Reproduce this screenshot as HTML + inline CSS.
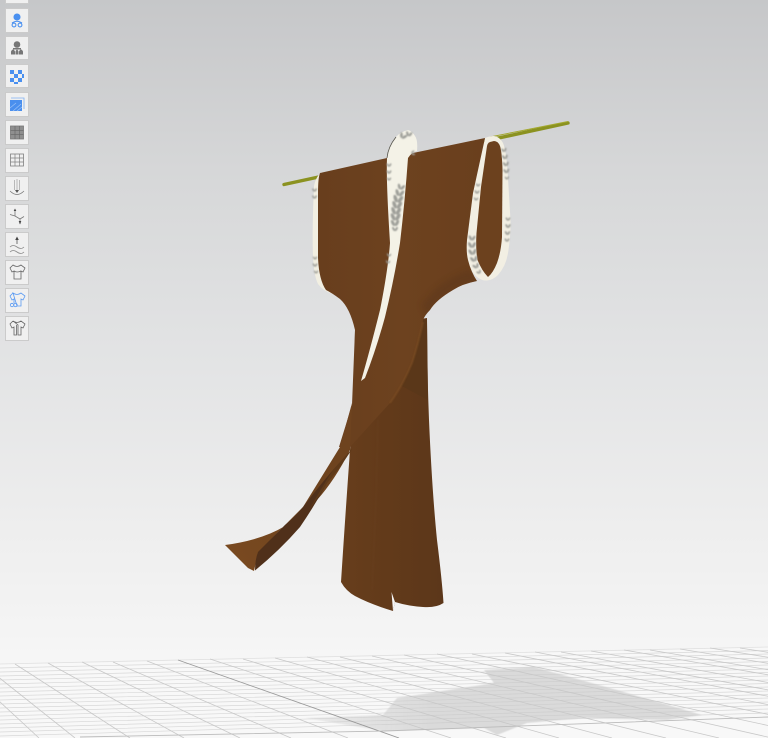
<!DOCTYPE html>
<html><head><meta charset="utf-8">
<style>
html,body{margin:0;padding:0;width:768px;height:738px;overflow:hidden}
body{background:linear-gradient(#c6c7c9 0,#d6d7d8 170px,#e2e3e4 350px,#eeeeee 530px,#f6f6f6 660px,#f6f6f6 738px)}
svg{position:absolute;left:0;top:0}
</style></head>
<body>
<svg width="768" height="738" viewBox="0 0 768 738" xmlns="http://www.w3.org/2000/svg">
<defs>
<linearGradient id="upper" x1="0" x2="1" y1="0" y2="0"><stop offset="0" stop-color="#683e1d"/><stop offset=".5" stop-color="#6d421f"/><stop offset="1" stop-color="#6a3f1d"/></linearGradient>
<linearGradient id="skirt" x1="0" x2="1" y1="0" y2="0"><stop offset="0" stop-color="#673e1c"/><stop offset=".45" stop-color="#623a1a"/><stop offset="1" stop-color="#5c371a"/></linearGradient>
<linearGradient id="tail" x1="0" x2="1" y1="1" y2="0"><stop offset="0" stop-color="#7a4a20"/><stop offset=".6" stop-color="#6e431e"/><stop offset="1" stop-color="#6e431f"/></linearGradient>
<linearGradient id="shad" gradientUnits="userSpaceOnUse" x1="305" x2="430" y1="0" y2="0"><stop offset="0" stop-color="#c8c8c8" stop-opacity=".3"/><stop offset="1" stop-color="#c8c8c8" stop-opacity=".62"/></linearGradient>
<filter id="soft" x="-30%" y="-30%" width="160%" height="160%"><feGaussianBlur stdDeviation=".75"/></filter>
<filter id="soft1" x="-20%" y="-20%" width="140%" height="140%"><feGaussianBlur stdDeviation=".5"/></filter>
<filter id="soft3" x="-20%" y="-20%" width="140%" height="140%"><feGaussianBlur stdDeviation="3"/></filter>
<clipPath id="panelclip"><path d="M320 173L387 158L413 153L485 138L473 193L467 240Q466 252 468 260Q471 272 477 281Q462 284 453 290Q436 300 430 310Q425 315 423 320Q418 345 412 363Q403 385 390 403Q370 425 350 447L339 447L352 405L355 330Q350 308 340 299Q332 293 326 290Q319 280 318 258L318 193Q318 178 320 173Z"/></clipPath>
<g id="wheat" fill="#9d9e98"><ellipse cx="-2.600" cy="0" rx="1.900" ry="4.200" transform="rotate(-28 -2.600 0)"/><ellipse cx="2.600" cy="0" rx="1.900" ry="4.200" transform="rotate(28 2.600 0)"/></g>
</defs>

<!-- floor -->
<path d="M0 664L768 647V738H0Z" fill="#f8f8f8"/>
<path d="M0 668L768 650.500M0 672L768 654M0 676L768 658M0 680L768 661.500M0 684L768 665M0 688L768 669M0 692L768 672.500M0 696L768 676M0 700L768 680M0 704L768 683.500M0 708L768 687M0 712L768 691M0 716L768 694.500M0 720L768 698M0 724L768 702M0 728L768 705.500M0 732L768 709M0 736L768 713" stroke="#d8d8d8" stroke-width=".7" fill="none"/>
<path d="M0 664L768 647" stroke="#e0e0e0" stroke-width=".8"/>
<!-- shadow -->
<path d="M484 670L534 667L617 690L702 715L667 720L584 718L527 723L497 735L484 728L384 731L305 718L383 715L397 698L494 683Z" fill="url(#shad)" filter="url(#soft1)"/>
<path d="M-65 665L-2 738M-40 665L39 738M-18 664L75 738M15 664L130 738M48 663L184 738M82 662L240 738M113 662L291 738M147 661L348 738M210 659L451 738M243 659L506 738M275 658L559 738M307 657L612 738M340 657L666 738M372 656L719 738M404 655L772 738M437 654L826 738M472 654L884 738M505 653L938 738M535 652L988 738M561 652L1031 738M591 651L1080 738M624 650L1135 738M650 650L1177 738M680 649L1227 738M710 648L1276 738M740 648L1326 738M770 647L1375 738" stroke="#c8c8c8" stroke-width=".8" fill="none"/>
<path d="M178 660L399 738" stroke="#999" stroke-width=".9" fill="none"/>
<path d="M80 737L384 731L768 717" stroke="#bbb" stroke-width=".9" fill="none"/>

<!-- rod -->
<path d="M284 184.500L568 123" stroke="#8b9220" stroke-width="3.400" stroke-linecap="round"/>
<path d="M490 137L568 121.500" stroke="#a3a82c" stroke-width="1"/>

<!-- right loop: outer white -->
<path d="M493 136Q488 136.500 485 138L473 193L467 240Q466 252 468 260Q471 272 477 277Q482 281 487 280.500Q493 280 498 275Q506 266 508 253Q511 235 510.500 220L507.500 170Q506 150 503 143Q499 136 493 136Z" fill="#f2efe3"/>
<!-- right loop: inner brown -->
<path d="M490 142Q487.500 143 487 146L481 187L476.500 233Q475.500 250 477.500 260Q482 271 488 277Q493 273 497 263Q501 252 502 237L502.500 170Q502 152 500 146Q498 141 494 141Z" fill="#6c411e"/>
<g filter="url(#soft)">
<use href="#wheat" transform="translate(504 150) rotate(-8) scale(.5)"/><use href="#wheat" transform="translate(505 157) rotate(-8) scale(.55)"/><use href="#wheat" transform="translate(506 164) rotate(-8) scale(.55)"/><use href="#wheat" transform="translate(506.500 171) rotate(-8) scale(.55)"/><use href="#wheat" transform="translate(507 178) rotate(-8) scale(.4)"/>
<use href="#wheat" transform="translate(508 219) scale(.45)"/><use href="#wheat" transform="translate(508 226) scale(.5)"/><use href="#wheat" transform="translate(507.500 233) scale(.5)"/><use href="#wheat" transform="translate(507 240) scale(.45)"/>
<use href="#wheat" transform="translate(478 185) rotate(6) scale(.4)"/><use href="#wheat" transform="translate(477 192) rotate(6) scale(.45)"/><use href="#wheat" transform="translate(476 199) rotate(6) scale(.4)"/>
<use href="#wheat" transform="translate(472 238) rotate(4) scale(.65)"/><use href="#wheat" transform="translate(472 245) rotate(0) scale(.75)"/><use href="#wheat" transform="translate(472.500 252) rotate(-6) scale(.75)"/><use href="#wheat" transform="translate(474 259) rotate(-14) scale(.7)"/><use href="#wheat" transform="translate(476 266) rotate(-24) scale(.6)"/><use href="#wheat" transform="translate(479 272) rotate(-34) scale(.45)"/>
</g>

<!-- left hem white -->
<path d="M322 172Q316 176 314 186Q312 230 313 257Q314 276 318 284Q323 291 333 294L340 280L325 180Z" fill="#f2efe2"/>
<g filter="url(#soft)">
<use href="#wheat" transform="translate(314.500 190) scale(.45)"/><use href="#wheat" transform="translate(314.500 197) scale(.45)"/><use href="#wheat" transform="translate(315 258) scale(.4)"/><use href="#wheat" transform="translate(315 265) scale(.45)"/><use href="#wheat" transform="translate(316 272) scale(.4)"/>
</g>

<!-- skirt -->
<path d="M355 330L427 318Q427 370 429 420Q432 490 437 540Q442 580 443.500 603Q436 608 423 607Q408 606 395 602L393 611Q370 604 355 596Q346 591 341 582Q345 520 350 450L354 400Z" fill="url(#skirt)"/>
<path d="M393 611L395 602L391.500 592Z" fill="#f6f6f6"/>
<path d="M378 420L376 500L372 590" stroke="#6d4420" stroke-width="1.500" fill="none" opacity=".3" filter="url(#soft)"/>
<!-- darker strip right of front panel -->
<path d="M423 320Q418 345 412 363L400 385L428 400L427 320Z" fill="#5a3719"/>

<!-- main upper panel -->
<path d="M320 173L387 158L413 153L485 138L473 193L467 240Q466 252 468 260Q471 272 477 281Q462 284 453 290Q436 300 430 310Q425 315 423 320Q418 345 412 363Q403 385 390 403Q370 425 350 447L339 447L352 405L355 330Q350 308 340 299Q332 293 326 290Q319 280 318 258L318 193Q318 178 320 173Z" fill="url(#upper)"/>
<!-- soft shading near sleeve underside, clipped to the panel -->
<g clip-path="url(#panelclip)"><path d="M477 281Q458 284 445 295Q432 305 428 318L422 305Q440 280 470 270Z" fill="#5d371a" opacity=".55" filter="url(#soft3)"/></g>
<path d="M423 322Q418 345 412 363Q403 385 390 403" stroke="#7c4d23" stroke-width="2" fill="none" opacity=".6" filter="url(#soft1)"/>

<!-- trailing panel -->
<path d="M352 403L350 450Q335 480 317 500Q300 518 285 526Q262 540 225 545Q240 560 248 568L254 571L258 553Q270 540 303 507L340 447Z" fill="url(#tail)"/>
<path d="M352 449Q340 468 327 483Q315 505 300 527Q280 550 255 570.500Q255 560 258 552Q270 540 285 525Q295 517 303 507Q320 485 333 470Q342 460 352 449Z" fill="#50301a"/>
<path d="M352 449Q340 468 327 483Q318 498 309 510Q322 487 333 470Z" fill="#5f3a19"/>

<!-- center ribbon -->
<path d="M408 130Q400 132 396 137Q388 147 387 158Q386 180 390 243Q388 270 380 310Q370 350 361 381L365 378Q376 350 385 317Q394 280 400 243Q405 200 408 158Q412 152 417 151Q418 140 415 136Q412 131 408 130Z" fill="#f4f2e7"/>
<path d="M396 137Q388 147 387 158" stroke="#55534b" stroke-width=".8" fill="none"/>
<g filter="url(#soft)">
<use href="#wheat" transform="translate(403 136) rotate(30) scale(.7)"/><use href="#wheat" transform="translate(409 134) rotate(10) scale(.6)"/><use href="#wheat" transform="translate(413 153) rotate(80) scale(.45)"/>
<use href="#wheat" transform="translate(389 165) scale(.45)"/><use href="#wheat" transform="translate(389 172) scale(.45)"/><use href="#wheat" transform="translate(389 179) scale(.4)"/>
<use href="#wheat" transform="translate(401 187) rotate(15) scale(.7)"/><use href="#wheat" transform="translate(399.500 193) rotate(12) scale(.85)"/><use href="#wheat" transform="translate(398 199) rotate(10) scale(.95)"/><use href="#wheat" transform="translate(397 205) rotate(6) scale(.95)"/><use href="#wheat" transform="translate(396 211) rotate(5) scale(.95)"/><use href="#wheat" transform="translate(395.500 217) rotate(2) scale(.95)"/><use href="#wheat" transform="translate(395 223) scale(.8)"/><use href="#wheat" transform="translate(395 229) scale(.55)"/>
<use href="#wheat" transform="translate(389 255) rotate(10) scale(.4)"/><use href="#wheat" transform="translate(388 262) rotate(10) scale(.4)"/>
</g>

<!-- toolbar -->
<g fill="#f0f0f0" stroke="#cbcbcb" stroke-width="1">
<rect x="5.500" y="-20.500" width="23" height="24"/>
<rect x="5.500" y="8.500" width="23" height="24"/>
<rect x="5.500" y="36.500" width="23" height="23"/>
<rect x="5.500" y="64.500" width="23" height="23"/>
<rect x="5.500" y="92.500" width="23" height="24"/>
<rect x="5.500" y="120.500" width="23" height="24"/>
<rect x="5.500" y="148.500" width="23" height="24"/>
<rect x="5.500" y="176.500" width="23" height="24"/>
<rect x="5.500" y="204.500" width="23" height="24"/>
<rect x="5.500" y="232.500" width="23" height="24"/>
<rect x="5.500" y="260.500" width="23" height="24"/>
<rect x="5.500" y="288.500" width="23" height="24"/>
<rect x="5.500" y="316.500" width="23" height="24"/>
</g>
<!-- icon 1 -->
<g fill="none" stroke="#4a90f0" stroke-width="1.100"><circle cx="17" cy="17" r="3" fill="#4a90f0"/><circle cx="14" cy="25" r="1.900"/><circle cx="20" cy="25" r="1.900"/><path d="M12 23Q17 19.500 22 23"/></g>
<!-- icon 2 -->
<g fill="#777"><circle cx="17" cy="44.500" r="3.300"/><path d="M11 54.500v-3q1-2 2-2t2 2v3zM15.500 54.500v-3q1-2 1.500-2t1.500 2v3zM19 54.500v-3q1-2 2-2t2 2v3z"/><path d="M13 49.500h8v-1.500h-8z"/></g>
<!-- icon 3 checker -->
<g fill="#4a90f0"><rect x="10" y="70" width="4" height="4"/><rect x="18" y="70" width="4" height="4"/><rect x="14" y="74" width="4" height="4"/><rect x="22" y="74" width="2" height="4"/><rect x="10" y="78" width="4" height="4"/><rect x="18" y="78" width="4" height="4"/><rect x="14" y="82" width="4" height="2"/></g>
<!-- icon 4 -->
<rect x="10" y="100" width="12" height="11" fill="#4a8fee"/><path d="M11 98H24V109" fill="none" stroke="#7faef2" stroke-width=".8"/><path d="M10 108L16 103M13 111L21 104M17 111L22 107" stroke="#9cc2f7" stroke-width=".7"/>
<!-- icon 5 -->
<rect x="10.500" y="126" width="13" height="13" fill="#8f8f8f" stroke="#777" stroke-width=".8"/><path d="M15 126V139M19.500 126V139M10.500 130.300H23.500M10.500 134.700H23.500" stroke="#666" stroke-width=".6"/>
<!-- icon 6 -->
<rect x="10.500" y="154" width="13" height="12" fill="none" stroke="#808080" stroke-width=".8"/><path d="M15 154V166M19.500 154V166M10.500 158H23.500M10.500 162H23.500" stroke="#808080" stroke-width=".7"/>
<!-- icon 7 -->
<g fill="none" stroke="#a0a0a0" stroke-width=".7"><path d="M14.500 180V190M17 179V192M19.500 180V190"/><path d="M10 191Q17 198 24 191" stroke="#777"/></g><path d="M15 190H19L17 193Z" fill="#555"/>
<!-- icon 8 -->
<g fill="none" stroke="#777" stroke-width=".8"><path d="M15 210V216L20 219V224M15 216L10 214.500M20 219L24 216.500"/></g><path d="M13.700 211L15 208.500L16.300 211ZM18.700 221L20 224.500L21.300 221Z" fill="#444"/>
<!-- icon 9 -->
<g fill="none" stroke="#888" stroke-width=".8"><path d="M10 247Q13 244 17 247T24 247M10 252Q13 249 17 252T24 252"/><path d="M17 238V244" stroke="#555"/></g><path d="M15.200 240L17 236.500L18.800 240Z" fill="#444"/>
<!-- icon 10 -->
<path d="M13 265L10 268L12 272L14 271V279H21V271L23 272L25 268L21 265Q17 268 13 265ZM14 271Q17 273 21 271" fill="none" stroke="#666" stroke-width=".8"/>
<!-- icon 11 -->
<path d="M13 293L10 296L12 300L14 299V303M17 306H21V299L23 300L25 296L21 293Q17 296 13 293Z" fill="none" stroke="#5a9af2" stroke-width=".8"/><g fill="none" stroke="#5a9af2" stroke-width=".8"><circle cx="12" cy="305" r="1.700"/><circle cx="15.500" cy="305" r="1.700"/></g>
<!-- icon 12 -->
<path d="M13 321L10 324L12 328L14 327V335H16.500V325M18 325V335H21V327L23 328L25 324L21 321Q17 324 13 321Z" fill="none" stroke="#666" stroke-width=".8"/>
</svg>
</body></html>
